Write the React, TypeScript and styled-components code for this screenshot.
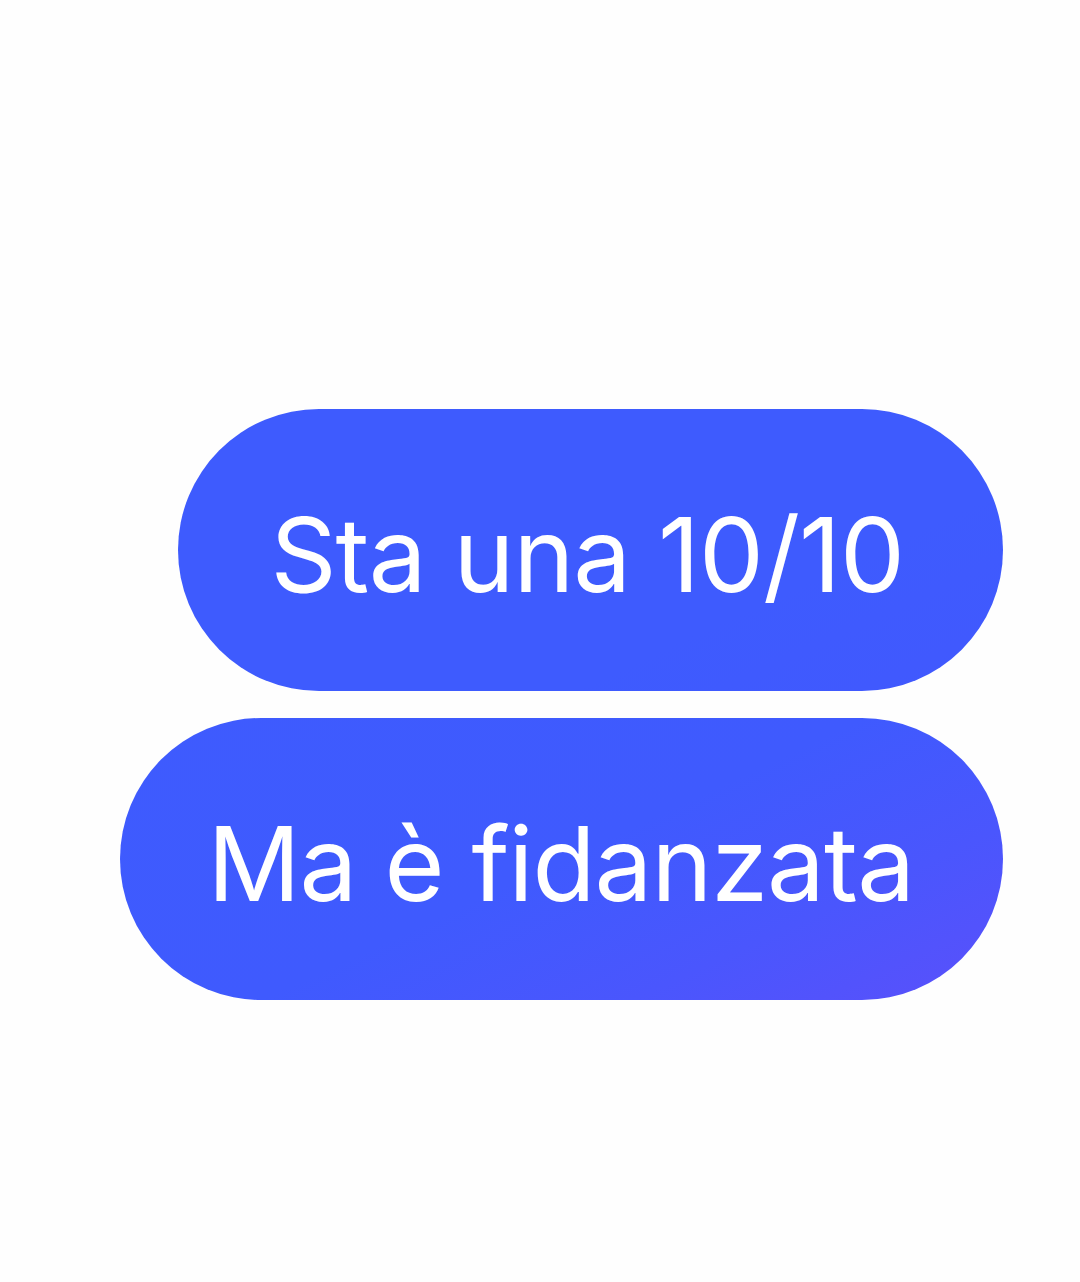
import React from "react";
import styled, { createGlobalStyle } from "styled-components";

const Global = createGlobalStyle`
  html, body { margin: 0; padding: 0; background: #fefefe; }
  body { font-family: Inter, Roboto, "Liberation Sans", sans-serif; }
`;

const Page = styled.div`
  width: 1080px;
  height: 1282px;
  box-sizing: border-box;
  padding: 409px 77px 0 0;
  display: flex;
  flex-direction: column;
  align-items: flex-end;
  gap: 27px;
`;

const Bubble = styled.div<{ $pl: number; $pr: number; $last?: boolean }>`
  height: 282px;
  box-sizing: border-box;
  padding: 0 ${(p) => p.$pr}px 0 ${(p) => p.$pl}px;
  display: flex;
  align-items: center;
  border-radius: 141px;
  color: #ffffff;
  font-size: 103px;
  font-weight: 400;
  letter-spacing: -1px;
  font-variant-ligatures: none;
  font-feature-settings: "liga" 0, "calt" 0;
  white-space: nowrap;
  background: ${(p) =>
    p.$last
      ? "linear-gradient(155deg, #3e5bfe 0%, #3f5afe 50%, #4a56fd 75%, #5a50fb 100%)"
      : "linear-gradient(155deg, #3e5bfe 0%, #3e5bfe 70%, #4158fe 100%)"};
`;

const Text = styled.span`
  display: block;
  padding-top: 8px;
`;

export default function App() {
  return (
    <>
      <Global />
      <Page>
        <Bubble $pl={92} $pr={99}>
          <Text>Sta una 10/10</Text>
        </Bubble>
        <Bubble $pl={88} $pr={89} $last>
          <Text>Ma è fidanzata</Text>
        </Bubble>
      </Page>
    </>
  );
}
